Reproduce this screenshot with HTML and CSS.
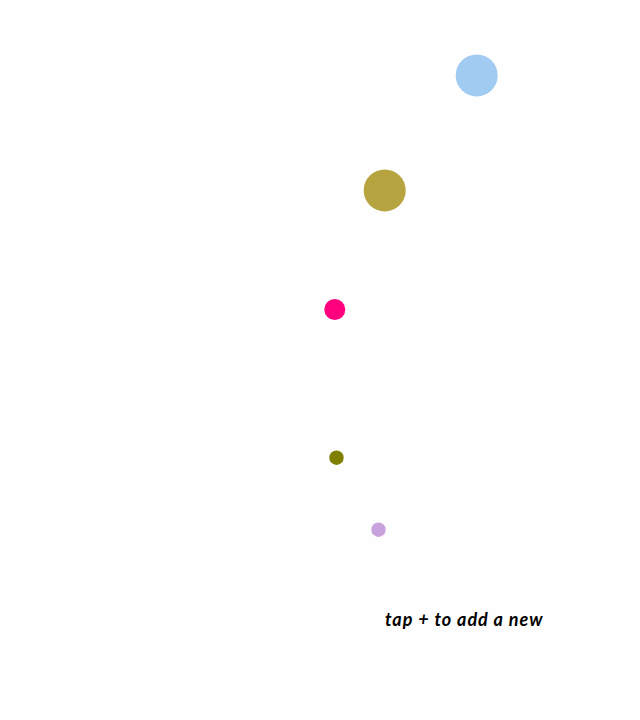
FILE: index.html
```html
<!DOCTYPE html>
<html>
<head>
	<title>tap + to add a new</title>
	<link rel="stylesheet" href="styles.css">
</head>
<body>
	<div class="canvas">
		<svg class="dots" width="640" height="720" viewBox="0 0 640 720">
			<circle class="dot-blue" cx="476.7" cy="75.4" r="21"></circle>
			<circle class="dot-gold" cx="384.7" cy="190.4" r="21"></circle>
			<circle class="dot-pink" cx="334.8" cy="309.5" r="10.5"></circle>
			<circle class="dot-olive" cx="336.5" cy="457.7" r="7.2"></circle>
			<circle class="dot-lilac" cx="378.5" cy="529.7" r="7.2"></circle>
		</svg>
		<div class="hint">tap + to add a new</div>
	</div>
</body>
</html>
```

FILE: styles.css
```css
html, body {
	margin: 0;
	background: #fefefe;
}

.canvas {
	position: relative;
	width: 640px;
	height: 720px;
	overflow: hidden;
}

.dots {
	display: block;
}

.dot-blue {
	fill: #a1cbf1;
}

.dot-gold {
	fill: #b5a440;
}

.dot-pink {
	fill: #ff007f;
}

.dot-olive {
	fill: #808000;
}

.dot-lilac {
	fill: #c8a2dc;
}

.hint {
	position: absolute;
	left: 385px;
	top: 609px;
	font-family: "Lato", sans-serif;
	font-style: italic;
	font-weight: bold;
	font-size: 18px;
	line-height: 20px;
	letter-spacing: 0.95px;
	white-space: nowrap;
	color: #000;
}
```
